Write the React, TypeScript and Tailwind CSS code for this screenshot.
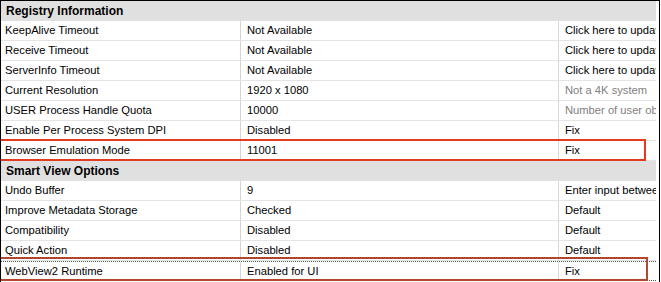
import React from "react";

type Row = { kind: "header"; label: string } | { kind: "row"; a: string; b: string; c: string; muted?: boolean; focus?: boolean };

const rows: Row[] = [
  { kind: "header", label: "Registry Information" },
  { kind: "row", a: "KeepAlive Timeout", b: "Not Available", c: "Click here to update" },
  { kind: "row", a: "Receive Timeout", b: "Not Available", c: "Click here to update" },
  { kind: "row", a: "ServerInfo Timeout", b: "Not Available", c: "Click here to update" },
  { kind: "row", a: "Current Resolution", b: "1920 x 1080", c: "Not a 4K system", muted: true },
  { kind: "row", a: "USER Process Handle Quota", b: "10000", c: "Number of user objects", muted: true },
  { kind: "row", a: "Enable Per Process System DPI", b: "Disabled", c: "Fix" },
  { kind: "row", a: "Browser Emulation Mode", b: "11001", c: "Fix" },
  { kind: "header", label: "Smart View Options" },
  { kind: "row", a: "Undo Buffer", b: "9", c: "Enter input between 1 and 100" },
  { kind: "row", a: "Improve Metadata Storage", b: "Checked", c: "Default" },
  { kind: "row", a: "Compatibility", b: "Disabled", c: "Default" },
  { kind: "row", a: "Quick Action", b: "Disabled", c: "Default" },
  { kind: "row", a: "WebView2 Runtime", b: "Enabled for UI", c: "Fix", focus: true },
];

export default function App() {
  return (
    <div
      className="w-[661px] h-[282px] bg-white overflow-hidden text-black"
      style={{ fontFamily: '"Liberation Sans", Arial, sans-serif' }}
    >
      <div className="relative w-[660px] h-[282px] border-l border-t border-r border-black overflow-hidden">
        <div className="w-[655px] overflow-hidden">
          {rows.map((r, i) =>
            r.kind === "header" ? (
              <div
                key={i}
                className="h-[20px] bg-[#e0e0e0] flex items-center pl-[5px] text-[12px] font-bold whitespace-nowrap"
              >
                {r.label}
              </div>
            ) : (
              <div
                key={i}
                className={
                  "grid grid-cols-[240px_318px_1fr] h-[20px] text-[11.2px] whitespace-nowrap " +
                  (r.focus
                    ? "border-t border-b border-dotted border-[#555]"
                    : "border-b border-[#e4e4e4]")
                }
              >
                <div className="flex items-center pl-[4px] border-r border-[#d4d4d4] overflow-hidden">{r.a}</div>
                <div className="flex items-center pl-[6px] border-r border-[#d9d9d9] overflow-hidden">{r.b}</div>
                <div className={"flex items-center pl-[6px] overflow-hidden " + (r.muted ? "text-[#808080]" : "")}>
                  {r.c}
                </div>
              </div>
            )
          )}
        </div>
        <div className="absolute left-0 top-[138px] w-[645px] h-[22px] border-2 border-l-0 border-[#e23b1f]" />
        <div className="absolute left-0 top-[256px] w-[647px] h-[24px] border-2 border-l-0 border-[#b3462f]" />
      </div>
    </div>
  );
}
